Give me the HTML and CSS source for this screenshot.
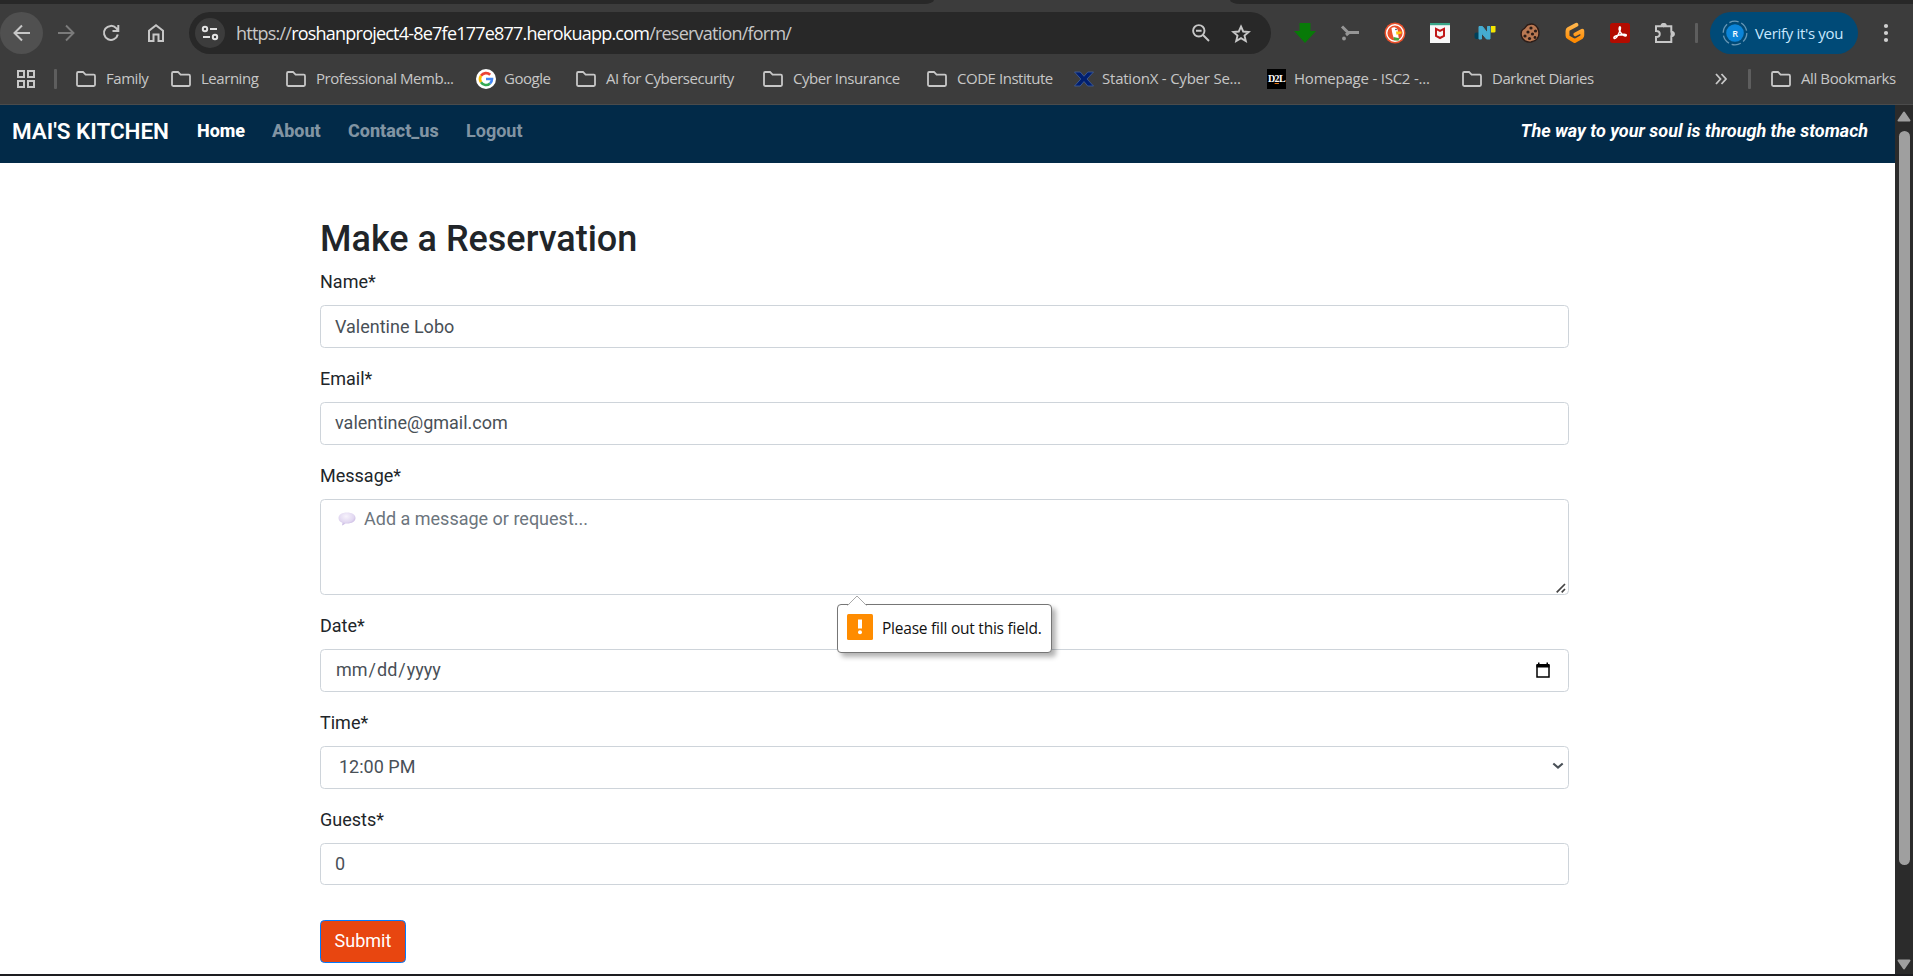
FILE: index.html
```html
<!DOCTYPE html>
<html lang="en">
<head>
<meta charset="utf-8">
<title>Mai's Kitchen - Make a Reservation</title>
<link rel="stylesheet" href="styles.css">
</head>
<body>
<svg class="defs" width="0" height="0">
  <symbol id="folder" viewBox="0 0 22 18"><path d="M2 3.2Q2 2 3.2 2H8l2.6 2.7h8.2Q20 4.700 20 5.900V14.800Q20 16 18.800 16H3.200Q2 16 2 14.800Z" fill="none" stroke="#c7c7c7" stroke-width="1.8"/></symbol>
</svg>
<div class="window">
  <div class="tabstrip"><div class="tabs-left"></div><div class="tabs-right"></div></div>
  <header class="chrome">
    <div class="toolbar">
      <span class="back"><svg width="18" height="18" viewBox="0 0 18 18"><path d="M17 9H2M9 1.500L1.500 9 9 16.500" fill="none" stroke="#c7c7c7" stroke-width="2"/></svg></span>
      <svg class="forward" width="18" height="18" viewBox="0 0 18 18"><path d="M1 9h15M9 1.500L16.500 9 9 16.500" fill="none" stroke="#7b7b7b" stroke-width="1.900"/></svg>
      <svg class="reload" width="18" height="18" viewBox="0 0 18 18"><path d="M15.800 10.500A7 7 0 1 1 14.200 4.200L16 6.500M16.300 1V6.900H10.500" fill="none" stroke="#c7c7c7" stroke-width="2"/></svg>
      <svg class="home" width="18" height="20" viewBox="0 0 18 20"><path d="M2 18V7.700L9 2.200l7 5.500V18h-4.500v-6.500h-5V18Z" fill="none" stroke="#c7c7c7" stroke-width="2"/></svg>
      <div class="omnibox">
        <span class="tune"><svg width="18" height="16" viewBox="0 0 18 16"><g fill="none" stroke="#e3e3e3" stroke-width="2"><circle cx="4" cy="4" r="2.200"/><path d="M9 4h7M2 12h7"/><circle cx="14" cy="12" r="2.200"/></g></svg></span>
        <span class="url">https://<b>roshanproject4-8e7fe177e877.herokuapp.com</b>/reservation/form/</span>
        <svg class="magnify" width="18" height="18" viewBox="0 0 18 18"><g fill="none" stroke="#c7c7c7" stroke-width="1.900"><circle cx="6.800" cy="6.800" r="5.700"/><path d="M11 11l6 6M4 6.800h5.600"/></g></svg>
        <svg class="star" width="20" height="19" viewBox="0 0 20 19"><path d="M10 2.500l2.200 5 5.500.5-4.200 3.600 1.300 5.400-4.800-2.900L5.200 17l1.300-5.400L2.300 8l5.500-.5Z" fill="none" stroke="#c7c7c7" stroke-width="1.900"/></svg>
      </div>
      <div class="extensions">
        <svg width="22" height="22" viewBox="0 0 22 22"><path d="M5.500 1h11v8H22L11 21 0 9h5.500Z" fill="#087a08"/></svg>
        <svg width="22" height="22" viewBox="0 0 22 22"><path d="M3 4.500L9 10.500M7 13l3-2.500H20" stroke="#969696" stroke-width="3" fill="none"/><circle cx="5" cy="16.500" r="1.900" fill="#969696"/></svg>
        <svg width="22" height="22" viewBox="0 0 22 22"><circle cx="11" cy="11" r="10.500" fill="#e9502b"/><circle cx="11" cy="11" r="8.300" fill="none" stroke="#fff" stroke-width="1.400"/><path d="M7.500 6c3-2 7 0 6.500 5l1 7-4.500.5C9 14 8 11 7.500 6Z" fill="#fff"/><path d="M12 9.500h5.500v2l-5 1.300Z" fill="#fdc70d"/><path d="M9.500 15l6 1.200-1 2.600-4.500-.5Z" fill="#45a53b"/><circle cx="12" cy="7.500" r=".8" fill="#245"/></svg>
        <svg width="22" height="22" viewBox="0 0 22 22"><path d="M1 1h20v20H1Z" fill="#f8f8f8"/><path d="M1 1h20v2.200H1Z" fill="#3aa688"/><path d="M7 6.800l4 2 4-2v7l-4 2.200-4-2.200Z" fill="none" stroke="#c01818" stroke-width="2"/></svg>
        <svg width="22" height="22" viewBox="0 0 22 22"><path d="M.5 12q0-1.500 2-1.500H6V17H2.500q-2 0-2-2Z" fill="#003f58"/><path d="M5 4.500h3.500l5 6.500V4.500H16V17h-3.500L7.500 11v6H5Z" fill="#45acd0" stroke="#45acd0"/><path d="M17 4H21.500v5.500q0 1-1.500 1h-3Z" fill="#f5e600"/></svg>
        <svg width="22" height="22" viewBox="0 0 22 22"><path d="M10 2.500C7 2.500 7.300 5.500 4.500 7 1.800 8.500 2 12 2.400 14c1 4.500 5.300 6.500 9.600 6 6-1 8.500-5.500 7.800-10.500C19.200 4.500 15 .8 10 2.500Z" fill="#b97852" stroke="#2b1b16" stroke-width="1.400"/><g fill="#2b1b16"><circle cx="12" cy="6" r="1.600"/><circle cx="16.500" cy="9" r="1.600"/><circle cx="9" cy="10" r="1.600"/><circle cx="13.500" cy="12" r="1.600"/><circle cx="6" cy="14" r="1.600"/><circle cx="10.500" cy="16.500" r="1.600"/><circle cx="16" cy="15.500" r="1.400"/></g></svg>
        <svg width="22" height="22" viewBox="0 0 22 22"><defs><linearGradient id="og" x2="0" y2="1"><stop stop-color="#ffb54b"/><stop offset="1" stop-color="#ff8a00"/></linearGradient></defs><path d="M12.500 2.800L4.500 7Q3.500 7.600 3.500 9v4.800q0 1 1 1.500l6.200 3.700 6.600-3.700q1-.7 1-2V8.700l-7 3.700" fill="none" stroke="url(#og)" stroke-width="3.900" stroke-linecap="round" stroke-linejoin="round"/></svg>
        <svg width="22" height="22" viewBox="0 0 22 22"><rect x="1" y="1" width="20" height="20" rx="2.500" fill="#b30b00"/><path d="M5.500 16.500C3 15 8 12.800 15 12.200c4 0 2 2.700 0 1.500C11 11.500 9.500 7 10.300 5.500c1.200-2 2 1-.3 5.500-1.200 2.600-3 6-4.500 5.500Z" fill="none" stroke="#fff" stroke-width="1.500"/></svg>
        <svg width="22" height="22" viewBox="0 0 22 22"><path d="M2 20V15c5 0 5-6 0-6V4.200h5.500a2.200 2.200 0 0 1 4.400 0H17.300v5.600a2.200 2.200 0 0 1 0 4.400V20Z" fill="none" stroke="#c7c7c7" stroke-width="2"/><circle cx="9.700" cy="3.200" r="2.200" fill="#c7c7c7"/><circle cx="18.700" cy="12" r="2.200" fill="#c7c7c7"/></svg>
      </div>
      <i class="rule"></i>
      <div class="verify">
        <span class="avatar"><svg width="26" height="26" viewBox="0 0 26 26"><circle cx="13" cy="13" r="11.800" fill="none" stroke="#6797b5" stroke-width="1.300" stroke-dasharray="9.500 2.860"/><circle cx="13" cy="13" r="8.800" fill="#0b84d8"/></svg><em>R</em></span>
        <span class="verify-text">Verify it's you</span>
      </div>
      <svg class="dots" width="6" height="20" viewBox="0 0 6 20"><g fill="#d0d0d0"><circle cx="3" cy="3" r="2.100"/><circle cx="3" cy="10" r="2.100"/><circle cx="3" cy="17" r="2.100"/></g></svg>
    </div>
    <div class="bookmarks">
      <svg class="apps" width="18" height="18" viewBox="0 0 18 18"><path d="M1 1h6v6H1ZM11 1h6v6h-6ZM1 11h6v6H1ZM11 11h6v6h-6Z" fill="none" stroke="#c7c7c7" stroke-width="2"/></svg>
      <i class="rule"></i>
      <div class="links">
        <span class="mark"><svg class="fold"><use href="#folder"/></svg><span>Family</span></span>
        <span class="mark"><svg class="fold"><use href="#folder"/></svg><span>Learning</span></span>
        <span class="mark"><svg class="fold"><use href="#folder"/></svg><span>Professional Memb...</span></span>
        <span class="mark site"><svg width="20" height="20" viewBox="0 0 20 20"><circle cx="10" cy="10" r="10" fill="#fff"/><g fill="none" stroke-width="2.600"><path d="M5 6.800A6 6 0 0 1 14.200 5.800" stroke="#ea4335"/><path d="M5 13.300A6 6 0 0 1 5 6.700" stroke="#fbbc05"/><path d="M14 14.500A6 6 0 0 1 5 13.300" stroke="#34a853"/><path d="M10 10h6A6 6 0 0 1 14 14.500" stroke="#4285f4"/></g></svg><span>Google</span></span>
        <span class="mark"><svg class="fold"><use href="#folder"/></svg><span>AI for Cybersecurity</span></span>
        <span class="mark"><svg class="fold"><use href="#folder"/></svg><span>Cyber Insurance</span></span>
        <span class="mark"><svg class="fold"><use href="#folder"/></svg><span>CODE Institute</span></span>
        <span class="mark site wide"><svg width="20" height="20" viewBox="0 0 20 20"><path d="M.5 3h5.800L10 7.300 13.800 3h5.700l-6.500 7 6.500 7h-5.800L10 12.500 6.200 17H.5l6.300-7Z" fill="#001f70" stroke="#43619c" stroke-width=".8"/></svg><span>StationX - Cyber Se...</span></span>
        <span class="mark site wide"><span class="dtl">D<u>2</u>L</span><span>Homepage - ISC2 -...</span></span>
        <span class="mark"><svg class="fold"><use href="#folder"/></svg><span>Darknet Diaries</span></span>
      </div>
      <svg class="more" width="12" height="12" viewBox="0 0 12 12"><path d="M1 1l4.500 5L1 11M6.500 1L11 6l-4.500 5" fill="none" stroke="#c7c7c7" stroke-width="1.800"/></svg>
      <i class="rule"></i>
      <span class="mark all"><svg class="fold"><use href="#folder"/></svg><span>All Bookmarks</span></span>
    </div>
  </header>
  <div class="viewport">
    <div class="page">
      <nav class="navbar">
        <a class="brand">MAI'S KITCHEN</a>
        <a class="nav-link active">Home</a>
        <a class="nav-link">About</a>
        <a class="nav-link contact">Contact_us</a>
        <a class="nav-link logout">Logout</a>
        <span class="tagline">The way to your soul is through the stomach</span>
      </nav>
      <main class="form">
        <h2>Make a Reservation</h2>
        <div class="label">Name*</div>
        <div class="field">Valentine Lobo</div>
        <div class="label">Email*</div>
        <div class="field email">valentine@gmail.com</div>
        <div class="label">Message*</div>
        <div class="field message">
          <svg class="bubble" width="18" height="14" viewBox="0 0 18 14"><defs><radialGradient id="bg" cx=".45" cy=".3" r=".75"><stop stop-color="#f7f3fc"/><stop offset=".6" stop-color="#e2d8f1"/><stop offset="1" stop-color="#b9a5d9"/></radialGradient></defs><path d="M9 .5c5 0 8.500 2.200 8.500 5.500S14 11.500 9 11.500H7.500L4.200 13.500 4.500 10.800C2 10 .5 8.200.5 6 .5 2.700 4 .5 9 .5Z" fill="url(#bg)"/></svg>
          <span>Add a message or request...</span>
          <svg class="grip" width="10" height="10" viewBox="0 0 10 10"><path d="M.7 9.300L9 1M5.700 9.300L9 6" stroke="#444" stroke-width="1.700"/></svg>
          <div class="popup">
            <svg class="tip" width="20" height="11" viewBox="0 0 20 11"><path d="M.5 11L10 1l9.500 10Z" fill="#fff"/><path d="M.5 10.500L10 1l9.500 9.500" fill="none" stroke="#a9a9a9"/></svg>
            <svg width="26" height="26" viewBox="0 0 26 26"><rect width="26" height="26" rx="1.500" fill="#ff8c00"/><path d="M11 5.500h4v9h-4Z" fill="#fff"/><circle cx="13" cy="18.300" r="2" fill="#fff"/></svg>
            <span class="popup-text">Please fill out this field.</span>
          </div>
        </div>
        <div class="label">Date*</div>
        <div class="field split date"><span>mm<i>/</i>dd<i>/</i>yyyy</span><svg class="calendar" width="16" height="17" viewBox="0 0 16 17"><path d="M2 3.500h12v11.500H2Z" fill="none" stroke="#000" stroke-width="1.500"/><path d="M1.500 2h13v3.500h-13ZM3 .500h1.500V3H3ZM11.500.500H13V3h-1.500Z"/></svg></div>
        <div class="label">Time*</div>
        <div class="field split time"><span>12:00 PM</span><svg width="12" height="8" viewBox="0 0 12 8"><path d="M1.300 1.500L6 5.600l4.700-4.100" fill="none" stroke="#495057" stroke-width="2.100"/></svg></div>
        <div class="label">Guests*</div>
        <div class="field guests">0</div>
        <button class="submit">Submit</button>
      </main>
    </div>
    <aside class="scrollbar">
      <svg width="14" height="11" viewBox="0 0 14 11"><path d="M7 1.500L12.500 9.500h-11Z" fill="#9f9f9f" stroke="#9f9f9f" stroke-width="2" stroke-linejoin="round"/></svg>
      <div class="thumb"></div>
      <svg class="down" width="14" height="11" viewBox="0 0 14 11"><path d="M7 9.500L12.500 1.500h-11Z" fill="#9f9f9f" stroke="#9f9f9f" stroke-width="2" stroke-linejoin="round"/></svg>
    </aside>
  </div>
</div>
</body>
</html>
```
FILE: styles.css
```css
* { box-sizing: border-box; }
body { margin: 0; background: #fff; font-family: Roboto, sans-serif; overflow: hidden; }
svg { display: block; flex: none; }
.defs { position: absolute; }
.window { width: 1913px; height: 976px; display: flex; flex-direction: column; background: #3c3c3c; border-bottom: 2px solid #1d1d20; }

/* Browser frame */
.tabstrip { height: 4px; flex: none; display: flex; justify-content: space-between; }
.tabs-left { width: 934px; background: #282828; border-bottom-right-radius: 10px 4px; }
.tabs-right { width: 683px; background: #282828; border-bottom-left-radius: 10px 4px; }
.chrome { height: 101px; flex: none; background: #3c3c3c; border-bottom: 1px solid #4b4b4b; font-family: "Open Sans", "Noto Sans", sans-serif; color: #c7c7c7; }
.toolbar { height: 58px; display: flex; align-items: center; }
.back { width: 43px; height: 42px; border-radius: 50%; background: #505050; display: grid; place-items: center; }
.forward { margin-left: 14px; }
.reload { margin-left: 27px; }
.home { margin-left: 27px; }
.omnibox { margin-left: 24px; width: 1082px; height: 42px; border-radius: 21px; background: #282828; display: flex; align-items: center; padding-left: 6px; }
.tune { width: 30px; height: 30px; border-radius: 50%; background: #3c3c3c; display: grid; place-items: center; }
.url { margin-left: 11px; width: 956px; font-size: 18px; letter-spacing: -0.78px; white-space: nowrap; }
.url b { font-weight: 400; color: #fff; }
.star { margin-left: 21px; }
.extensions { margin-left: 23px; display: flex; gap: 23px; }
.rule { width: 3px; height: 20px; border-radius: 1px; background: #5e5e5e; flex: none; }
.toolbar .rule { margin-left: 19px; }
.verify { margin-left: 12px; width: 148px; height: 42px; border-radius: 21px; background: #004a77; display: flex; align-items: center; padding-left: 12px; color: #c9e8ff; }
.avatar { position: relative; width: 26px; height: 26px; }
.avatar em { position: absolute; inset: 0; display: grid; place-items: center; font: 600 9px "Open Sans", sans-serif; color: #fff; }
.verify-text { margin-left: 7px; padding-bottom: 1px; font-size: 15px; letter-spacing: -0.32px; white-space: nowrap; }
.dots { margin-left: 25px; }
.bookmarks { height: 34px; display: flex; align-items: center; font-size: 15px; letter-spacing: -0.46px; padding-left: 17px; }
.bookmarks .rule { margin-left: 19px; }
.links { flex: none; margin-left: 18px; display: grid; grid-template-columns: 95px 115px 191px 99px 187px 164px 148px 193px 194px 160px; }
.mark { display: flex; align-items: center; gap: 9px; white-space: nowrap; height: 22px; }
.mark > span:last-child { padding-bottom: 2px; }
.fold { width: 22px; height: 18px; }
.site { gap: 8px; }
.wide { letter-spacing: -0.22px; }
.dtl { width: 19px; height: 20px; background: #000; color: #fff; font: 700 10px/20px "Liberation Serif", serif; letter-spacing: -0.7px; text-align: center; }
.dtl u { text-decoration-color: #e87511; }
.more { margin-left: 94px; }
.bookmarks .more + .rule { margin-left: 21px; }
.all { margin-left: 19px; letter-spacing: -0.4px; }

/* Page */
.viewport { flex: 1; min-height: 0; display: flex; }
.page { width: 1895px; background: #fff; }
.navbar { height: 58px; background: #022a48; display: flex; align-items: center; padding: 0 27px 7px 12px; font-size: 18px; font-weight: 700; white-space: nowrap; }
.brand { width: 185px; font-size: 22.5px; color: #fff; font-weight: 600; letter-spacing: -0.05px; }
.nav-link { width: 75px; font-weight: 800; color: #8194a3; }
.nav-link.active { color: #fff; }
.contact { width: 118px; margin-left: 1px; }
.logout { font-weight: 700; }
.tagline { margin-left: auto; color: #fff; font-style: italic; }
.form { margin: 55px 0 0 320px; width: 1249px; font-size: 18px; line-height: 27px; color: #212529; }
h2 { margin: 0 0 7px; font-size: 36px; line-height: 43px; font-weight: 500; }
.label { margin-bottom: 10px; }
.field { height: 43px; margin-bottom: 17px; border: 1px solid #ced4da; border-radius: 4.5px; padding: 7px 14px; color: #495057; }
.email { padding-top: 6px; }
.message { position: relative; height: 96px; display: flex; padding-top: 5px; color: #6c757d; }
.bubble { margin: 7px 8px 0 3px; }
.grip { position: absolute; right: 2px; bottom: 1px; }
.split { display: flex; justify-content: space-between; align-items: center; }
.date { padding: 0 17px 3px 15px; }
.date i { font-style: normal; padding: 0 1px; }
.calendar { margin-top: 2px; }
.time { padding: 0 4px 3px 18px; }
.guests { height: 42px; padding-top: 6px; }
.submit { display: block; margin-top: 35px; width: 86px; height: 43px; border: 1px solid #007bff; border-radius: 4.5px; background: #e84610; color: #fff; font: 400 18px Roboto, sans-serif; padding: 0 0 2px; }
.popup { position: absolute; left: 516px; top: 104px; z-index: 2; width: 215px; height: 49px; background: #fff; border: 1px solid #767676; border-radius: 4px; box-shadow: 4px 4px 5px rgba(0,0,0,.3); display: flex; align-items: center; padding: 0 0 3px 9px; gap: 9px; color: #111; font: 15.500px "Open Sans", sans-serif; letter-spacing: -0.23px; white-space: nowrap; }
.popup-text { padding-top: 2px; }
.popup .tip { position: absolute; left: 9px; top: -10px; }
.scrollbar { width: 18px; background: #2b2b2b; display: flex; flex-direction: column; align-items: center; padding: 6px 0 4px; }
.thumb { width: 11px; height: 734px; margin-top: 9px; border-radius: 6px; background: #9f9f9f; }
.down { margin-top: auto; }
```
